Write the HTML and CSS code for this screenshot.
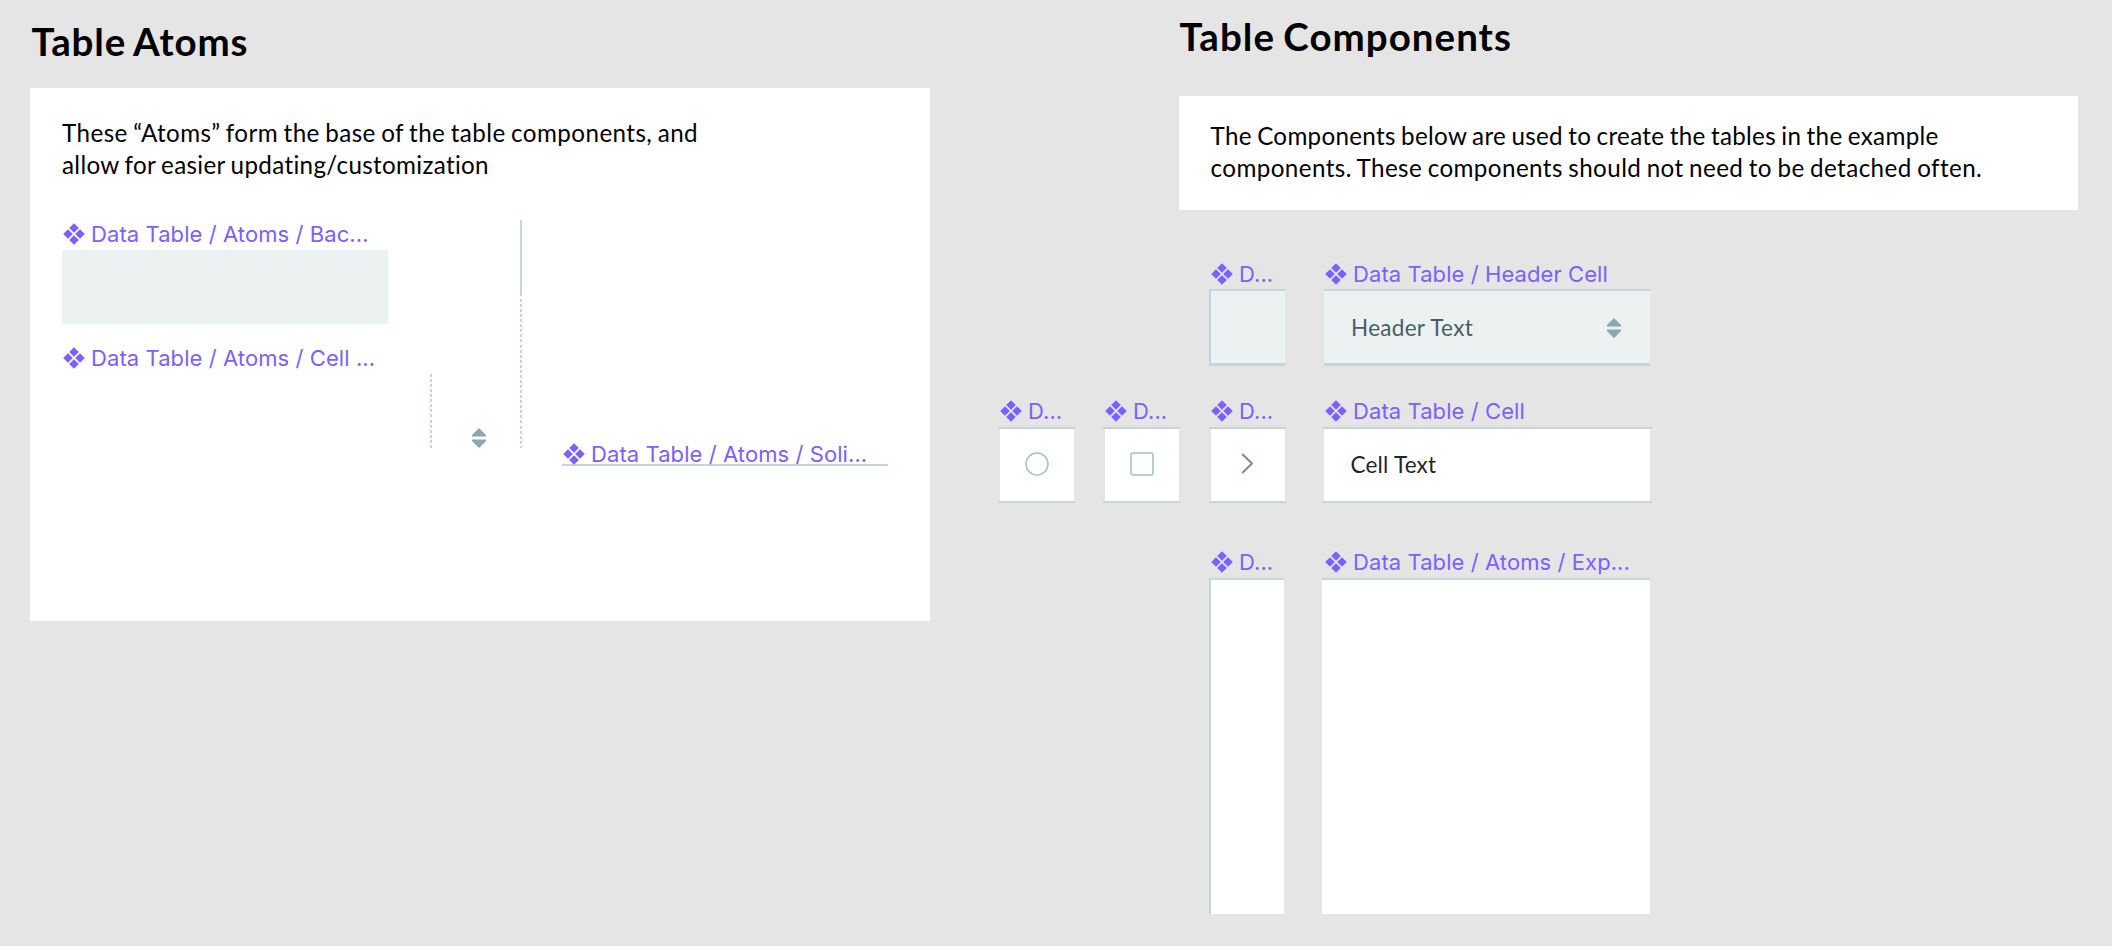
FILE: index.html
```html
<!DOCTYPE html>
<html lang="en">
<head>
<meta charset="utf-8">
<title>Table Atoms and Components</title>
<link rel="stylesheet" href="styles.css">
</head>
<body>
<svg class="defs" width="0" height="0" aria-hidden="true">
  <symbol id="component" viewBox="0 0 22 22">
    <path d="M11 .2 15.8 5 11 9.8 6.2 5ZM11 12.2 15.8 17 11 21.8 6.2 17ZM5 6.2 9.8 11 5 15.8.2 11ZM17 6.2 21.8 11 17 15.8 12.2 11Z" fill="#7b61ff"/>
  </symbol>
  <symbol id="sort" viewBox="0 0 16 20">
    <path d="M8 0 15 7V8.5H1V7ZM8 20 1 13V11.5H15V13Z" fill="#8ca8ae"/>
  </symbol>
</svg>
<main class="canvas">
  <section class="atoms">
    <h1 class="title title-atoms">Table Atoms</h1>
    <div class="panel panel-atoms">
      <p class="intro"><span class="a1">These “Atoms” form the base of the table components, and</span><br><span class="a2">allow for easier updating/customization</span></p>
    </div>
  </section>
  <section class="components">
    <h1 class="title title-components">Table Components</h1>
    <div class="panel panel-components">
      <p class="intro"><span class="c1">The Components below are used to create the tables in the example</span><br><span class="c2">components. These components should not need to be detached often.</span></p>
    </div>
  </section>

  <div class="node atom-background">
    <div class="label"><svg class="mark"><use href="#component"/></svg>Data Table / Atoms / Bac...</div>
    <div class="swatch"></div>
  </div>
  <div class="node atom-cell">
    <div class="label"><svg class="mark"><use href="#component"/></svg>Data Table / Atoms / Cell ...</div>
  </div>
  <div class="node dotted dotted-short"></div>
  <svg class="node sort atom-sort"><use href="#sort"/></svg>
  <div class="node vertical-solid"></div>
  <div class="node dotted dotted-long"></div>
  <div class="node atom-solid">
    <div class="label"><svg class="mark"><use href="#component"/></svg>Data Table / Atoms / Soli...</div>
    <div class="rule"></div>
  </div>

  <div class="node header-small">
    <div class="label"><svg class="mark"><use href="#component"/></svg>D...</div>
    <div class="header-box narrow"></div>
  </div>
  <div class="node header-cell">
    <div class="label"><svg class="mark"><use href="#component"/></svg>Data Table / Header Cell</div>
    <div class="header-box wide"><span class="header-text">Header Text</span><svg class="sort"><use href="#sort"/></svg></div>
  </div>

  <div class="node cell-radio">
    <div class="label"><svg class="mark"><use href="#component"/></svg>D...</div>
    <div class="cell small"><svg class="control" viewBox="0 0 24 24"><circle cx="12" cy="12" r="11" fill="none" stroke="#a9c0c5" stroke-width="1.5"/></svg></div>
  </div>
  <div class="node cell-check">
    <div class="label"><svg class="mark"><use href="#component"/></svg>D...</div>
    <div class="cell small"><svg class="control" viewBox="0 0 24 24"><rect x="1" y="1" width="22" height="22" rx="2.2" fill="none" stroke="#a9c0c5" stroke-width="1.6"/></svg></div>
  </div>
  <div class="node cell-expand">
    <div class="label"><svg class="mark"><use href="#component"/></svg>D...</div>
    <div class="cell small"><svg class="control" viewBox="0 0 24 24"><path d="M6.7 2.5 16 11.5 6.7 20.5" fill="none" stroke="#6c919b" stroke-width="2" stroke-linecap="round" stroke-linejoin="round"/></svg></div>
  </div>
  <div class="node cell-text">
    <div class="label"><svg class="mark"><use href="#component"/></svg>Data Table / Cell</div>
    <div class="cell large"><span class="body-text">Cell Text</span></div>
  </div>

  <div class="node expand-side">
    <div class="label"><svg class="mark"><use href="#component"/></svg>D...</div>
    <div class="side-box"></div>
  </div>
  <div class="node expand-area">
    <div class="label"><svg class="mark"><use href="#component"/></svg>Data Table / Atoms / Exp...</div>
    <div class="area-box"></div>
  </div>
</main>
</body>
</html>
```
FILE: styles.css
```css
* { box-sizing: border-box; }
body { margin: 0; background: #e5e5e5; }
.defs { position: absolute; }
.canvas {
  position: relative;
  display: flex;
  width: 2112px;
  height: 946px;
  overflow: hidden;
  font-family: Lato, "Open Sans", sans-serif;
  font-variant-ligatures: none;
  color: #000;
}
.atoms { margin-left: 30px; width: 899.5px; padding-top: 17px; }
.components { margin-left: 249px; width: 899.5px; padding-top: 12px; }
.title { margin: 0; font-size: 38.5px; line-height: 48px; font-weight: 700; white-space: nowrap; word-spacing: -2px; }
.title-atoms { margin-left: 1.5px; letter-spacing: 0.85px; }
.title-components { margin-left: 1px; letter-spacing: 1.02px; }
.panel { background: #fff; padding-left: 32px; }
.panel-atoms { margin-top: 23px; height: 533px; padding-top: 29px; }
.panel-components { margin-top: 36px; height: 114px; padding-top: 24px; }
.intro { margin: 0; font-size: 24.2px; line-height: 32px; white-space: nowrap; word-spacing: -1.15px; }
.a1 { letter-spacing: 0.43px; }
.a2 { letter-spacing: 0.34px; }
.c1 { letter-spacing: 0.31px; }
.c2 { letter-spacing: 0.42px; }

.node { position: absolute; }
.label {
  display: flex;
  align-items: center;
  gap: 6px;
  height: 28px;
  padding-left: 2px;
  font-family: Inter, sans-serif;
  font-size: 22px;
  letter-spacing: 0.08px;
  color: #7b61ff;
  white-space: nowrap;
}
.mark { width: 22px; height: 22px; flex: none; }
.sort { width: 16px; height: 20px; }

.atom-background { left: 61px; top: 220px; }
.swatch { margin: 2px 0 0 1px; width: 326px; height: 74px; background: #ecf2f2; }
.atom-cell { left: 61px; top: 344px; }
.atom-solid { left: 561px; top: 439.5px; }
.rule { margin: -3.5px 0 0 1px; width: 326px; height: 2px; background: #c5d5d9; }
.atom-sort { left: 471px; top: 428px; }
.vertical-solid { left: 520px; top: 220px; width: 2px; height: 76px; background: #c5d5d9; }
.dotted { width: 2px; background: repeating-linear-gradient(#c5d5d9 0 3px, transparent 3px 5.06px); }
.dotted-short { left: 429.5px; top: 374px; height: 74px; }
.dotted-long { left: 520px; top: 298.5px; height: 149.5px; }

.header-small { left: 1209px; top: 260px; }
.header-cell { left: 1323px; top: 260px; }
.header-box { margin-top: 1px; height: 77px; background: #ecf2f2; border-top: 2px solid #c5d5d9; border-bottom: 3px solid #c5d5d9; }
.narrow { width: 76px; border-left: 2px solid #c5d5d9; }
.wide { margin-left: 1px; width: 326px; padding: 1px 28px 0 27px; display: flex; align-items: center; justify-content: space-between; }
.header-text { font-size: 22.5px; letter-spacing: 0.3px; color: #476064; }
.body-text { font-size: 22.5px; letter-spacing: 0.2px; color: #1c2829; }

.cell-radio { left: 998px; top: 397px; }
.cell-check { left: 1103px; top: 397px; }
.cell-expand { left: 1209px; top: 397px; }
.cell-text { left: 1323px; top: 397px; }
.cell { height: 76px; margin-top: 2px; padding-bottom: 2px; border-top: 2px solid #c5d5d9; border-bottom: 2px solid #c5d5d9; display: flex; align-items: center; background: linear-gradient(#fff, #fff) center / calc(100% - 3px) 100% no-repeat; }
.small { width: 77px; justify-content: center; }
.large { width: 329px; margin-left: -0.5px; padding-left: 28px; }
.control { width: 24px; height: 24px; }

.expand-side { left: 1209px; top: 548px; }
.expand-area { left: 1323px; top: 548px; }
.side-box { margin-top: 2px; width: 75px; height: 336px; background: #fff; border-top: 2px solid #c4d8d9; border-left: 2px solid #c4d8d9; }
.area-box { margin: 2px 0 0 -1px; width: 328px; height: 336px; background: #fff; border-top: 2px solid #c4d8d9; }
```
